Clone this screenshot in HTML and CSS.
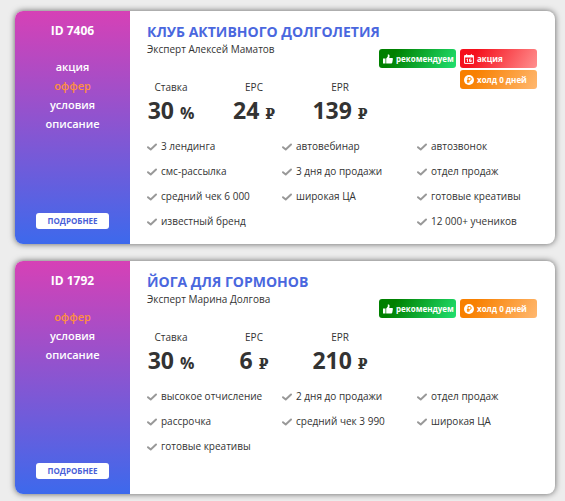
FILE: index.html
```html
<!DOCTYPE html>
<html lang="ru">
<head>
    <meta charset="UTF-8">
    <meta name="viewport" content="width=device-width, initial-scale=1.0">
    <title>Офферы</title>
    <link rel="stylesheet" href="styles.css">
</head>
<body>
    <!-- Общие иконки -->
    <svg class="sprite" aria-hidden="true">
        <defs>
            <linearGradient id="heartFill" x1="1" y1="0" x2="0" y2="1">
                <stop offset="0.2" stop-color="#d83fb8"/>
                <stop offset="0.8" stop-color="#3f66e8"/>
            </linearGradient>
        </defs>
        <symbol id="heart" viewBox="0 0 16 16">
            <path d="M8 15 1.700 8.200C.3 6.700.2 4 1.700 2.300 3.400.5 6.500.7 8 3.200 9.500.7 12.600.5 14.300 2.300 15.800 4 15.700 6.700 14.300 8.200Z" fill="none" stroke="url(#heartFill)" stroke-width="1.2" stroke-linejoin="round"/>
        </symbol>
        <symbol id="check" viewBox="0 0 10 8">
            <path d="M1 4.200 3.700 6.500 9 1.500" fill="none" stroke="#999" stroke-width="2" stroke-linecap="round" stroke-linejoin="round"/>
        </symbol>
        <symbol id="thumb" viewBox="0 0 10 10">
            <path d="M0 4.500h2.500V9.500H0zM3.200 4.500 4.800 2.600V.6C6 .2 6.700 1 6.600 2L6.300 4H9.200Q10 4 9.900 5L9.300 8.600Q9.100 9.500 8.200 9.500H3.200Z" fill="#fff"/>
        </symbol>
        <symbol id="calendar" viewBox="0 0 10 10">
            <path d="M.6 1.600H9.400V9.400H.6Z" fill="none" stroke="#fff"/>
            <path d="M.6 1.600H9.400V3.500H.6ZM2 .3h1.200v1.500H2zM6.800.3H8v1.500H6.800z" fill="#fff"/>
            <path d="M2.500 5.500 3.500 4.900V8M7.300 5H5.500V7.500H7.300V6.300H5.500" fill="none" stroke="#fff" stroke-width=".9"/>
        </symbol>
        <symbol id="coin" viewBox="0 0 10 10">
            <circle cx="5" cy="5" r="5" fill="#fff"/>
            <path d="M4 8V2.500H5.700A1.500 1.500 0 0 1 5.700 5.500H2.900M2.900 6.800H5.800" fill="none" stroke="#f80" stroke-width="1"/>
        </symbol>
    </svg>

    <!-- Клуб активного долголетия -->
    <article class="offer">
        <aside class="side">
            <div class="offer-id">ID 7406</div>
            <nav class="menu">
                <a href="#">акция</a>
                <a href="#" class="active">оффер</a>
                <a href="#">условия</a>
                <a href="#">описание</a>
            </nav>
            <a href="#" class="more">ПОДРОБНЕЕ</a>
        </aside>
        <div class="content">
            <div class="top">
                <div class="info">
                    <h2 class="title">КЛУБ АКТИВНОГО ДОЛГОЛЕТИЯ</h2>
                    <div class="expert">Эксперт Алексей Маматов</div>
                    <div class="stats">
                        <div class="stat">
                            <div class="stat-name">Ставка</div>
                            <div class="stat-value">30 <span class="unit">%</span></div>
                        </div>
                        <div class="stat">
                            <div class="stat-name">EPC</div>
                            <div class="stat-value">24 <span class="unit rub">₽</span></div>
                        </div>
                        <div class="stat">
                            <div class="stat-name">EPR</div>
                            <div class="stat-value">139 <span class="unit rub">₽</span></div>
                        </div>
                    </div>
                </div>
                <div class="marks">
                    <button class="favorite" type="button" aria-label="В избранное"><svg><use href="#heart"/></svg></button>
                    <div class="badges">
                        <div class="badge green"><svg><use href="#thumb"/></svg>рекомендуем</div>
                        <div class="badge red"><svg><use href="#calendar"/></svg>акция</div>
                        <div class="badge orange"><svg><use href="#coin"/></svg>холд 0 дней</div>
                    </div>
                </div>
            </div>
            <div class="features">
                <ul>
                    <li><svg><use href="#check"/></svg>3 лендинга</li>
                    <li><svg><use href="#check"/></svg>смс-рассылка</li>
                    <li><svg><use href="#check"/></svg>средний чек 6 000</li>
                    <li><svg><use href="#check"/></svg>известный бренд</li>
                </ul>
                <ul>
                    <li><svg><use href="#check"/></svg>автовебинар</li>
                    <li><svg><use href="#check"/></svg>3 дня до продажи</li>
                    <li><svg><use href="#check"/></svg>широкая ЦА</li>
                </ul>
                <ul>
                    <li><svg><use href="#check"/></svg>автозвонок</li>
                    <li><svg><use href="#check"/></svg>отдел продаж</li>
                    <li><svg><use href="#check"/></svg>готовые креативы</li>
                    <li><svg><use href="#check"/></svg>12 000+ учеников</li>
                </ul>
            </div>
        </div>
    </article>

    <!-- Йога для гормонов -->
    <article class="offer">
        <aside class="side">
            <div class="offer-id">ID 1792</div>
            <nav class="menu">
                <a href="#" class="active">оффер</a>
                <a href="#">условия</a>
                <a href="#">описание</a>
            </nav>
            <a href="#" class="more">ПОДРОБНЕЕ</a>
        </aside>
        <div class="content">
            <div class="top">
                <div class="info">
                    <h2 class="title">ЙОГА ДЛЯ ГОРМОНОВ</h2>
                    <div class="expert">Эксперт Марина Долгова</div>
                    <div class="stats">
                        <div class="stat">
                            <div class="stat-name">Ставка</div>
                            <div class="stat-value">30 <span class="unit">%</span></div>
                        </div>
                        <div class="stat">
                            <div class="stat-name">EPC</div>
                            <div class="stat-value">6 <span class="unit rub">₽</span></div>
                        </div>
                        <div class="stat">
                            <div class="stat-name">EPR</div>
                            <div class="stat-value">210 <span class="unit rub">₽</span></div>
                        </div>
                    </div>
                </div>
                <div class="marks">
                    <button class="favorite" type="button" aria-label="В избранное"><svg><use href="#heart"/></svg></button>
                    <div class="badges">
                        <div class="badge green"><svg><use href="#thumb"/></svg>рекомендуем</div>
                        <div class="badge orange"><svg><use href="#coin"/></svg>холд 0 дней</div>
                    </div>
                </div>
            </div>
            <div class="features">
                <ul>
                    <li><svg><use href="#check"/></svg>высокое отчисление</li>
                    <li><svg><use href="#check"/></svg>рассрочка</li>
                    <li><svg><use href="#check"/></svg>готовые креативы</li>
                </ul>
                <ul>
                    <li><svg><use href="#check"/></svg>2 дня до продажи</li>
                    <li><svg><use href="#check"/></svg>средний чек 3 990</li>
                </ul>
                <ul>
                    <li><svg><use href="#check"/></svg>отдел продаж</li>
                    <li><svg><use href="#check"/></svg>широкая ЦА</li>
                </ul>
            </div>
        </div>
    </article>
</body>
</html>
```
FILE: styles.css
```css
* {
    box-sizing: border-box;
}

body {
    margin: 0;
    padding: 11px 10px 7px 15px;
    background: #ededed;
    color: #333;
    font-family: "Open Sans", sans-serif;
    font-size: 11px;
    display: flex;
    flex-direction: column;
    gap: 17px;
}

.sprite {
    display: none;
}

a {
    color: inherit;
    text-decoration: none;
}

.offer {
    display: flex;
    min-height: 233px;
    background: #fff;
    border-radius: 8px;
    box-shadow: 0 0 6px rgba(0, 0, 0, 0.6);
    overflow: hidden;
}

/* левая колонка */
.side {
    flex: 0 0 115px;
    display: flex;
    flex-direction: column;
    align-items: center;
    padding: 10px 0 15px;
    background: linear-gradient(#d641b6, #3d69ec);
    color: #fff;
    text-align: center;
}

.offer-id {
    font-size: 12px;
    line-height: 20px;
    font-weight: 700;
}

.menu {
    display: flex;
    flex-direction: column;
    margin-top: 16px;
    font-size: 11px;
    line-height: 19px;
    font-weight: 600;
}

.menu .active {
    color: #ff9040;
}

.more {
    width: 73px;
    margin-top: auto;
    background: #fff;
    border-radius: 3px;
    color: #4a5fd8;
    font-size: 8px;
    line-height: 16px;
    font-weight: 700;
}

/* правая часть */
.content {
    flex: 1;
    min-width: 0;
    padding: 12px 18px 10px 17px;
}

.top {
    display: flex;
    justify-content: space-between;
}

.info {
    flex: 1;
    min-width: 0;
}

.title {
    margin: 0;
    color: #4a67de;
    font-size: 14px;
    line-height: 18px;
    font-weight: 700;
    white-space: nowrap;
}

.expert {
    font-size: 10px;
    line-height: 16px;
}

.stats {
    display: grid;
    grid-template-columns: 48px 38px 54px;
    gap: 40px;
    margin-top: 24px;
}

.stat {
    display: flex;
    flex-direction: column;
    align-items: center;
    white-space: nowrap;
}

.stat-name {
    font-size: 10px;
    line-height: 13px;
}

.stat-value {
    font-size: 23px;
    line-height: 32px;
    font-weight: 700;
}

.unit {
    font-size: 16px;
    line-height: 16px;
}

.rub {
    font-family: "DejaVu Serif", serif;
    font-size: 14px;
}

.marks {
    flex: 0 0 158px;
    display: flex;
    flex-direction: column;
    align-items: flex-end;
    padding-top: 2px;
}

.favorite {
    padding: 0;
    border: none;
    background: none;
    cursor: pointer;
}

.favorite svg {
    display: block;
    width: 16px;
    height: 16px;
}

.badges {
    display: flex;
    flex-wrap: wrap;
    justify-content: flex-end;
    gap: 2px 4px;
    margin-top: 8px;
}

.badge {
    display: flex;
    align-items: center;
    gap: 3px;
    width: 77px;
    height: 19px;
    padding-left: 4px;
    border-radius: 3px;
    color: #fff;
    font-size: 8px;
    font-weight: 700;
    white-space: nowrap;
}

.badge svg {
    flex: none;
    width: 10px;
    height: 10px;
}

.green {
    background: linear-gradient(120deg, #008000 20%, #20e070);
}

.red {
    background: linear-gradient(120deg, #f5101c 20%, #ff9090);
}

.orange {
    background: linear-gradient(120deg, #f88000 20%, #ffb870);
}

/* список преимуществ */
.features {
    display: grid;
    grid-template-columns: repeat(3, minmax(0, 1fr));
    gap: 15px;
    margin-top: 8px;
}

.features ul {
    margin: 0;
    padding: 0;
    list-style: none;
}

.features li {
    display: flex;
    align-items: center;
    gap: 4px;
    font-size: 10px;
    line-height: 25px;
    white-space: nowrap;
}

.features svg {
    width: 10px;
    height: 8px;
}
```
